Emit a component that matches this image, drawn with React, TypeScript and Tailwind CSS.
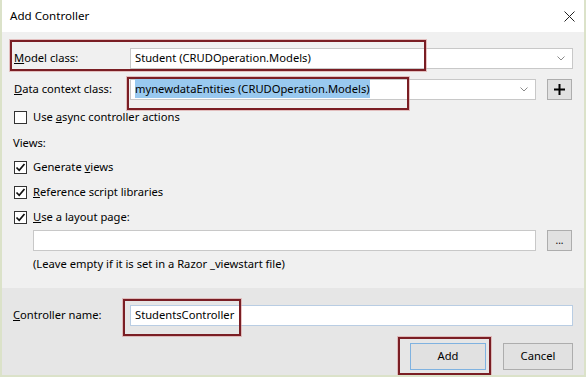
import React from "react";

const Chevron = ({ className = "" }: { className?: string }) => (
  <svg width="8" height="5" viewBox="0 0 8 5" className={className}>
    <path d="M0.5 0.5 L4 4 L7.5 0.5" fill="none" stroke="#8a8a8a" strokeWidth="1" />
  </svg>
);

const Check = () => (
  <div className="w-[13px] h-[13px] border border-[#333] bg-white flex items-center justify-center shrink-0">
    <svg width="11" height="11" viewBox="0 0 11 11">
      <path d="M1.5 5.5 L4.2 8.3 L9.5 2" fill="none" stroke="#111" strokeWidth="1.7" />
    </svg>
  </div>
);

const Empty = () => <div className="w-[13px] h-[13px] border border-[#333] bg-white shrink-0" />;

const RedBox = ({ c }: { c: string }) => (
  <div
    className={`absolute border-2 border-[#7a1e24] shadow-[0_0_0_1px_rgba(215,150,150,0.55)] pointer-events-none ${c}`}
  />
);

export default function App() {
  return (
    <div
      className="relative w-[586px] h-[377px] overflow-hidden text-[11.2px] text-black border-l-2 border-r-2 border-b-2 border-[#dbe2c9]"
      style={{ fontFamily: '"Segoe UI", "Noto Sans", sans-serif' }}
    >
      {/* Title bar */}
      <div className="h-[32px] bg-white flex items-center pl-[8px] pr-[9px]">
        <span className="leading-none text-[11.6px]">Add Controller</span>
        <div className="flex-1" />
        <svg width="11" height="11" viewBox="0 0 11 11" className="mt-[1px]">
          <path d="M0.5 0.5 L10.5 10.5 M10.5 0.5 L0.5 10.5" stroke="#222" strokeWidth="1" />
        </svg>
      </div>

      {/* Body */}
      <div className="h-[256px] bg-[#f0f0f0] pl-[11px] pr-[11px] pt-[16px] flex flex-col">
        <div className="h-[21px] flex items-center">
          <div className="w-[117px] pl-[1px]">
            <span className="underline">M</span>odel class:
          </div>
          <div className="flex-1 h-[21px] bg-white border border-[#c8c8c8] flex items-center pl-[4px] pr-[7px]">
            <span className="flex-1">Student (CRUDOperation.Models)</span>
            <Chevron />
          </div>
        </div>

        <div className="h-[21px] mt-[10px] flex items-center">
          <div className="w-[117px] pl-[1px]">
            <span className="underline">D</span>ata context class:
          </div>
          <div className="w-[406px] h-[21px] bg-white border border-[#c8c8c8] flex items-center pl-[4px] pr-[7px]">
            <span className="flex-1">
              <span className="bg-[#99c9ef] py-[2px]">mynewdataEntities (CRUDOperation.Models)</span>
            </span>
            <Chevron />
          </div>
          <div className="ml-[11px] w-[25px] h-[21px] bg-[#e1e1e1] border border-[#adadad] flex items-center justify-center">
            <svg width="11" height="11" viewBox="0 0 11 11">
              <path d="M5.5 0 V11 M0 5.5 H11" stroke="#000" strokeWidth="2" />
            </svg>
          </div>
        </div>

        <div className="h-[18px] mt-[8px] flex items-center pl-[1px]">
          <Empty />
          <span className="ml-[6px]">
            Use <span className="underline">a</span>sync controller actions
          </span>
        </div>

        <div className="h-[18px] mt-[8px] flex items-center">
          <span>Views:</span>
        </div>

        <div className="h-[18px] mt-[6px] flex items-center pl-[1px]">
          <Check />
          <span className="ml-[6px]">
            Generate <span className="underline">v</span>iews
          </span>
        </div>

        <div className="h-[18px] mt-[7px] flex items-center pl-[1px]">
          <Check />
          <span className="ml-[6px]">
            <span className="underline">R</span>eference script libraries
          </span>
        </div>

        <div className="h-[18px] mt-[7px] flex items-center pl-[1px]">
          <Check />
          <span className="ml-[6px]">
            <span className="underline">U</span>se a layout page:
          </span>
        </div>

        <div className="h-[21px] mt-[4px] flex items-center pl-[20px]">
          <div className="w-[503px] h-[21px] bg-white border border-[#c8c8c8]" />
          <div className="ml-[11px] w-[25px] h-[21px] bg-[#e1e1e1] border border-[#adadad] flex items-center justify-center text-[10px] leading-none pb-[2px]">
            ...
          </div>
        </div>

        <div className="h-[18px] mt-[4px] flex items-center pl-[20px]">
          (Leave empty if it is set in a Razor _viewstart file)
        </div>
      </div>

      {/* Footer */}
      <div className="h-[87px] bg-[#e6e6e6] pl-[11px] pr-[11px] pt-[17px] flex flex-col">
        <div className="h-[21px] flex items-center">
          <div className="w-[117px]">
            <span className="underline">C</span>ontroller name:
          </div>
          <div className="flex-1 h-[21px] bg-white border border-[#b9cde3] flex items-center pl-[4px]">
            StudentsController
          </div>
        </div>
        <div className="mt-[17px] h-[27px] flex justify-end">
          <div className="w-[76px] h-[27px] bg-[#e1e1e1] border border-[#7fb2e0] flex items-center justify-center">
            Add
          </div>
          <div className="ml-[17px] w-[70px] h-[27px] bg-[#e1e1e1] border border-[#adadad] flex items-center justify-center">
            Cancel
          </div>
        </div>
      </div>

      <RedBox c="left-[8px] top-[40px] w-[416px] h-[31px]" />
      <RedBox c="left-[125px] top-[77px] w-[282px] h-[33px]" />
      <RedBox c="left-[121px] top-[299px] w-[118px] h-[37px]" />
      <RedBox c="left-[396px] top-[337px] w-[93px] h-[38px]" />
    </div>
  );
}
